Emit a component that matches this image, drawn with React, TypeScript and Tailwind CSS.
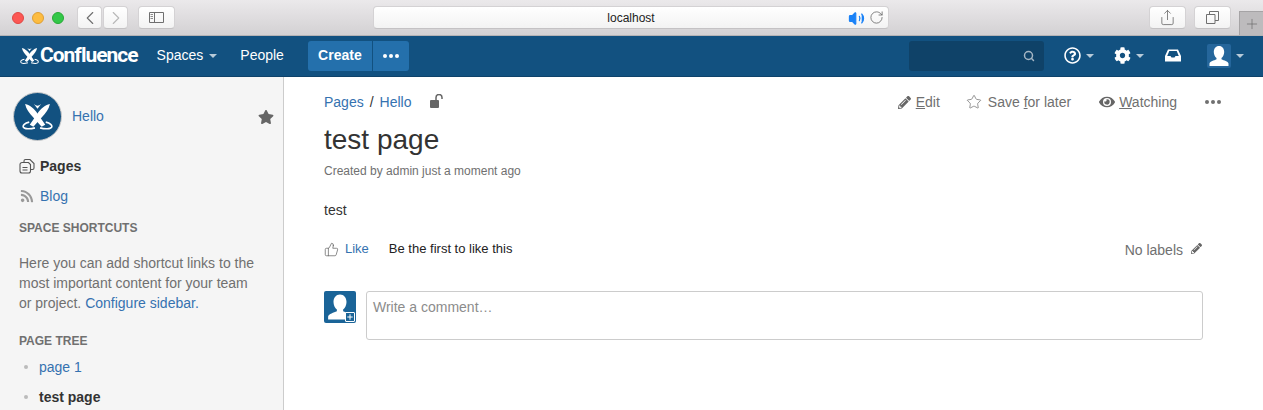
import { ChevronLeft, ChevronRight, RotateCw, Plus, Search, ThumbsUp, Star, Share, Volume2 } from 'lucide-react';
import { FaCog, FaEye, FaPencilAlt, FaRegQuestionCircle, FaRss, FaStar } from 'react-icons/fa';

function Caret({ color = 'border-t-white/70' }: { color?: string }) {
  return <span className={`inline-block w-0 h-0 border-x-[4px] border-x-transparent border-t-[4px] ${color}`} />;
}

function UserGlyph({ className }: { className?: string }) {
  return (
    <svg viewBox="0 0 24 24" className={className} fill="currentColor">
      <path d="M12 2c-3.200 0-5.200 2.600-5.200 6 0 2.600 1.200 4.800 2.700 6v1.300c-2.500 1.300-6.500 1.900-7 4.200V22h19v-2.500c-.5-2.300-4.500-2.900-7-4.200V14c1.500-1.200 2.700-3.400 2.700-6 0-3.400-2-6-5.200-6z" />
    </svg>
  );
}

function LogoMark({ className }: { className?: string }) {
  return (
    <svg viewBox="0 0 30 25" className={className}>
      <path fill="currentColor" d="M3 0c5 1 9 5 12 9l7.500 11-3.500 2-8-9C7 9 4 5 3 0z" />
      <path fill="currentColor" d="M27 0c-5 1-9 5-12 9L7.500 20l3.500 2 8-9c4-4 7-8 8-13z" />
      <path fill="currentColor" d="M11.500 0Q15 3 18.500 0L15 4.500z" />
      <path fill="none" stroke="currentColor" strokeWidth="1.600" d="M7 17.500C2.500 18.500.6 20.500 1.300 22.300 2.300 24.300 8 24.300 12.500 23" />
      <path fill="none" stroke="currentColor" strokeWidth="1.600" d="M23 17.500c4.500 1 6.400 3 5.700 4.800-1 2-6.700 2-11.200.7" />
    </svg>
  );
}

function ToolButton({ children, className = '' }: { children: React.ReactNode; className?: string }) {
  return (
    <div className={`h-[23px] flex items-center justify-center rounded-[4px] bg-gradient-to-b from-white to-[#f3f3f3] border border-[#d4d2d4] border-b-[#c4c2c4] text-[#6f6f6f] ${className}`}>
      {children}
    </div>
  );
}

function BrowserBar() {
  return (
    <div className="relative h-[36px] flex items-start pt-[6px] pl-[12px] bg-gradient-to-b from-[#ebe9eb] to-[#d3d1d3] border-b border-[#b5b3b5]">
      <div className="flex gap-[8px] pt-[6px]">
        <span className="w-[12px] h-[12px] rounded-full bg-[#fc5753] border border-[#df4744]" />
        <span className="w-[12px] h-[12px] rounded-full bg-[#fdbc40] border border-[#de9f34]" />
        <span className="w-[12px] h-[12px] rounded-full bg-[#33c748] border border-[#27aa35]" />
      </div>
      <div className="ml-[13px] flex gap-px">
        <ToolButton className="w-[25px]"><ChevronLeft size={22} strokeWidth={1.2} /></ToolButton>
        <ToolButton className="w-[25px] text-[#b8b8b8]"><ChevronRight size={22} strokeWidth={1.2} /></ToolButton>
      </div>
      <ToolButton className="ml-[10px] w-[37px]">
        <svg viewBox="0 0 15 11" className="w-[15px] h-[11px]" fill="none" stroke="currentColor">
          <path d="M.5.5h14v10H.500zM5.500.5v10" />
          <path d="M1.500 2.500h2.500M1.500 4.500h2.500M1.500 6.500h2.500" strokeWidth=".8" />
        </svg>
      </ToolButton>
      <ToolButton className="ml-[198px] w-[516px] relative font-['Liberation_Sans',sans-serif] text-[12px] text-[#222]">
        localhost
        <span className="absolute right-[23px] top-[3px] text-[#1a82f7]"><Volume2 size={17} fill="currentColor" strokeWidth={1.6} /></span>
        <span className="absolute right-[4px] top-[3px] text-[#666]"><RotateCw size={15} strokeWidth={1.3} /></span>
      </ToolButton>
      <ToolButton className="ml-[260px] w-[37px]"><Share size={17} strokeWidth={1.2} /></ToolButton>
      <ToolButton className="ml-[8px] w-[37px]">
        <svg viewBox="0 0 13 13" className="w-[13px] h-[13px]" fill="none" stroke="currentColor">
          <path d="M.5 3.500h8.500v9H.500zM3.500 3.500V.5h9v9H9" />
        </svg>
      </ToolButton>
      <div className="absolute right-0 bottom-0 w-[24px] h-[24px] flex items-center justify-center bg-[#bdbbbd] border-l border-t border-[#a5a3a5] text-[#666]">
        <Plus size={16} strokeWidth={1} />
      </div>
    </div>
  );
}

function NavBar() {
  return (
    <div className="h-[41px] flex items-center bg-[#125180] border-b border-[#0e426a] text-white pl-[20px] pb-px">
      <LogoMark className="w-[19px] h-[16px]" />
      <span className="ml-[1px] font-['Roboto',sans-serif] font-bold text-[21px] tracking-[-1px] leading-none">Confluence</span>
      <span className="ml-[19px] text-[14px] flex items-center gap-[6px]">Spaces <Caret /></span>
      <span className="ml-[23px] text-[14px]">People</span>
      <div className="ml-[24px] h-[30px] flex gap-px">
        <div className="w-[64px] flex items-center justify-center bg-[#2470ac] rounded-l-[3px] font-bold text-[14px]">Create</div>
        <div className="w-[36px] flex items-center justify-center bg-[#2470ac] rounded-r-[3px] gap-[2px]">
          <span className="w-[4px] h-[4px] rounded-full bg-white" />
          <span className="w-[4px] h-[4px] rounded-full bg-white" />
          <span className="w-[4px] h-[4px] rounded-full bg-white" />
        </div>
      </div>
      <div className="ml-[500px] w-[135px] h-[30px] flex items-center justify-end pr-[9px] bg-[#0f4268] rounded-[3px] text-[#a5b6c4]">
        <Search size={12} strokeWidth={3} />
      </div>
      <div className="ml-[20px] flex items-center gap-[5px]">
        <FaRegQuestionCircle size={17} />
        <Caret />
      </div>
      <div className="ml-[20px] flex items-center gap-[5px]">
        <FaCog size={17} />
        <Caret />
      </div>
      <svg viewBox="0 0 16 13" className="ml-[21px] w-[16px] h-[13px]" fill="currentColor">
        <path fillRule="evenodd" d="M3 .5h10L16 7v5.500H0V7zM4.300 2 2.200 7h3.300l1 1.500h3L10.500 7h3.300l-2.100-5z" />
      </svg>
      <div className="ml-[26px] w-[24px] h-[24px] rounded-[2px] bg-[#25669b] flex items-center justify-center">
        <UserGlyph className="w-[24px] h-[24px] text-white" />
      </div>
      <span className="ml-[5px] flex"><Caret /></span>
    </div>
  );
}

function Sidebar() {
  return (
    <aside className="w-[284px] shrink-0 h-[333px] overflow-hidden bg-[#f5f5f5] border-r border-[#cccccc] text-[14px] pl-[19px]">
      <div className="flex items-center -ml-[6px] mt-[15px] pr-[9px]">
        <div className="w-[49px] h-[49px] rounded-full bg-[#125180] border border-[#ccc] flex items-center justify-center text-white">
          <LogoMark className="w-[31px] h-[26px]" />
        </div>
        <span className="ml-[10px] text-[#3572b0]">Hello</span>
        <FaStar size={16} className="ml-auto text-[#666]" />
      </div>
      <div className="mt-[15px] flex items-center h-[20px]">
        <svg viewBox="0 0 16 16" className="w-[16px] h-[16px] text-[#555]" fill="none" stroke="currentColor" strokeWidth="1.100">
          <path d="M3 4.500h6.500l2 2V13a2 2 0 0 1-2 2H3a2 2 0 0 1-2-2V6.500a2 2 0 0 1 2-2z" />
          <path d="M5 4.500V3a1.500 1.500 0 0 1 1.500-1.500H11L15 5.500V10a1.500 1.500 0 0 1-1.500 1.500h-2" />
          <path d="M3.500 9.500h5M3.500 12h5" />
        </svg>
        <span className="ml-[5px] font-bold text-[#333]">Pages</span>
      </div>
      <div className="mt-[10px] flex items-center h-[20px]">
        <FaRss size={14} className="ml-px text-[#999]" />
        <span className="ml-[6px] text-[#3572b0]">Blog</span>
      </div>
      <div className="mt-[14px] text-[12px] font-bold text-[#707070] leading-[16px]">SPACE SHORTCUTS</div>
      <p className="mt-[17px] w-[245px] text-[#707070] leading-[20px]">
        Here you can add shortcut links to the most important content for your team or project. <span className="text-[#3572b0]">Configure sidebar.</span>
      </p>
      <div className="mt-[20px] text-[12px] font-bold text-[#707070] leading-[16px]">PAGE TREE</div>
      <ul className="mt-[8px]">
        <li className="flex items-center h-[20px]">
          <span className="ml-[5px] w-[4px] h-[4px] rounded-full bg-[#bbb]" />
          <span className="ml-[11px] text-[#3572b0]">page 1</span>
        </li>
        <li className="flex items-center h-[20px] mt-[10px]">
          <span className="ml-[5px] w-[4px] h-[4px] rounded-full bg-[#bbb]" />
          <span className="ml-[11px] font-bold text-[#333]">test page</span>
        </li>
      </ul>
    </aside>
  );
}

function Main() {
  return (
    <main className="flex-1 pl-[40px] pr-[60px] text-[14px] text-[#333]">
      <div className="flex items-center h-[20px] mt-[15px]">
        <span className="text-[#3572b0]">Pages</span>
        <span className="mx-[6px] text-[#333]">/</span>
        <span className="text-[#3572b0]">Hello</span>
        <svg viewBox="0 0 13 14" className="ml-[18px] -mt-[3px] w-[13px] h-[14px] text-[#666]" fill="currentColor">
          <rect x="0" y="6" width="9" height="8" rx="1" />
          <path d="M6 6V3.500a3 3 0 0 1 6 0V5" fill="none" stroke="currentColor" strokeWidth="1.500" />
        </svg>
        <div className="ml-auto flex items-center text-[#707070]">
          <FaPencilAlt size={13} className="text-[#666]" />
          <span className="ml-[5px]"><u>E</u>dit</span>
          <Star size={16} strokeWidth={1.1} className="ml-[26px]" />
          <span className="ml-[6px]">Save <u>f</u>or later</span>
          <FaEye size={16} className="ml-[28px] text-[#666]" />
          <span className="ml-[4px]"><u>W</u>atching</span>
          <span className="ml-[28px] mr-[-18px] flex gap-[2px]">
            <span className="w-[4px] h-[4px] rounded-full bg-[#707070]" />
            <span className="w-[4px] h-[4px] rounded-full bg-[#707070]" />
            <span className="w-[4px] h-[4px] rounded-full bg-[#707070]" />
          </span>
        </div>
      </div>
      <h1 className="mt-[10px] text-[28px] leading-[36px] text-[#333]">test page</h1>
      <div className="mt-[5px] text-[12px] leading-[16px] text-[#707070]">Created by admin just a moment ago</div>
      <div className="mt-[21px] leading-[20px] text-[#333]">test</div>
      <div className="mt-[19px] flex items-center h-[20px]">
        <ThumbsUp size={15} strokeWidth={1.2} className="text-[#666]" />
        <span className="ml-[6px] text-[13px] text-[#3572b0]">Like</span>
        <span className="ml-[20px] text-[13px] text-[#222]">Be the first to like this</span>
        <span className="ml-auto text-[#707070] mt-[3px]">No labels</span>
        <FaPencilAlt size={11} className="ml-[8px] mr-px mt-[-1px] text-[#666]" />
      </div>
      <div className="mt-[32px] flex items-start gap-[10px]">
        <div className="relative w-[32px] h-[32px] rounded-[2px] bg-[#1a6498] text-white flex items-center justify-center">
          <UserGlyph className="w-[30px] h-[30px]" />
          <span className="absolute right-[1px] bottom-[1px] w-[10px] h-[10px] flex items-center justify-center bg-[#1a6498] border border-white rounded-[1px]">
            <Plus size={8} strokeWidth={3} />
          </span>
        </div>
        <div className="flex-1 h-[49px] border border-[#cccccc] rounded-[3px] px-[6px] py-[5px] leading-[20px] text-[#8c8c8c]">Write a comment…</div>
      </div>
    </main>
  );
}

export default function App() {
  return (
    <div className="w-[1263px] h-[410px] overflow-hidden bg-white font-['Liberation_Sans',Arial,sans-serif]">
      <BrowserBar />
      <NavBar />
      <div className="flex">
        <Sidebar />
        <Main />
      </div>
    </div>
  );
}
